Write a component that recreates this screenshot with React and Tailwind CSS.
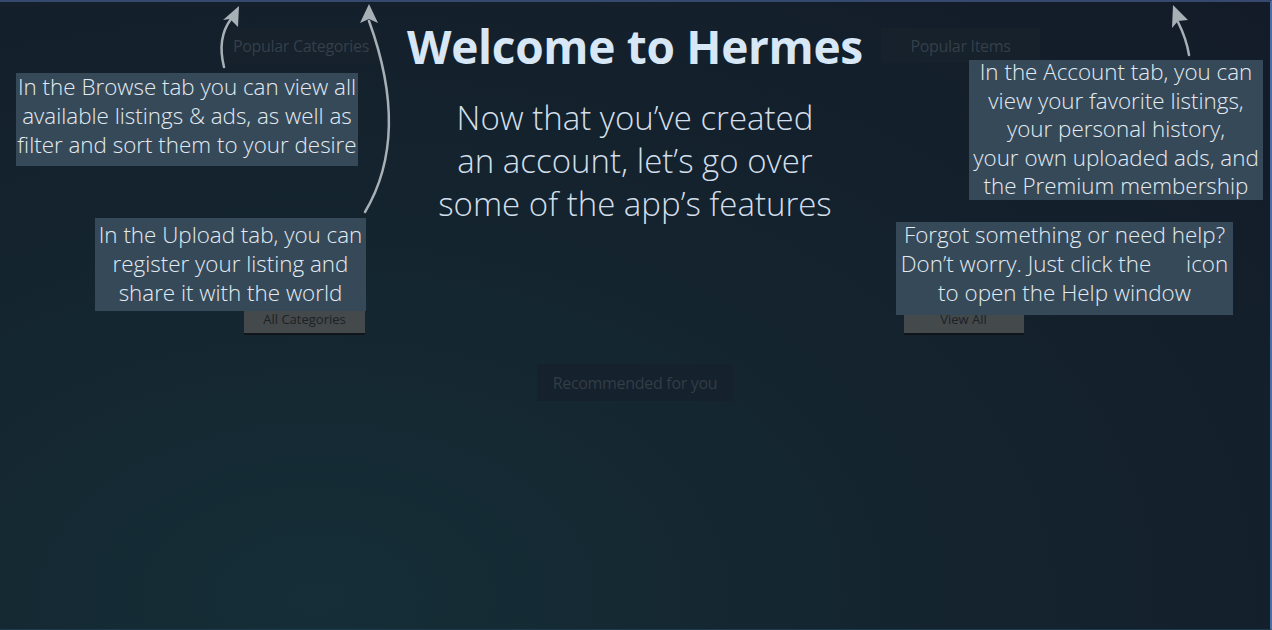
import React from "react";

const callFont = { fontFamily: '"Open Sans", "Noto Sans", sans-serif' };

function Callout({ className, innerClass, lines }) {
  return (
    <div
      className={`absolute bg-[#364959] text-[#e3ebf2] text-[22.4px] font-light text-center ${className}`}
      style={callFont}
    >
      <div className={innerClass}>
        {lines.map((l, i) => (
          <div key={i} className="whitespace-pre">{l}</div>
        ))}
      </div>
    </div>
  );
}

export default function App() {
  return (
    <div
      className="relative w-[1272px] h-[630px] overflow-hidden bg-[radial-gradient(ellipse_at_25%_95%,#152e37_0%,#14242f_45%,#131b28_100%)] border-t-2 border-t-[#34496c] border-r-2 border-r-[#4a6ea8] border-b border-b-[#1e3b4e]"
      style={{ fontFamily: '"Open Sans", "Noto Sans", sans-serif' }}
    >
      {/* top tab indicator */}
      <div className="absolute left-[622px] top-[-2px] w-[24px] h-[2px] bg-[#8196b6]" />

      {/* underlying dimmed app content */}
      <div className="flex justify-between pl-[222px] pr-[230px] pt-[26px]">
        <div className="flex flex-col items-center w-[158px]">
          <div className="h-[35px] w-[158px] bg-[#16212c] text-[#343f49] text-[16px] flex items-center justify-center tracking-[-0.3px]">
            Popular Categories
          </div>
          <div className="mt-[244px] ml-[7px] h-[28px] w-[121px] bg-[#44494c] border-b-2 border-b-[#0f1519] text-[#1c2226] text-[13px] flex items-center justify-center">
            All Categories
          </div>
        </div>
        <div className="flex flex-col items-center w-[159px]">
          <div className="h-[35px] w-[159px] bg-[#16212c] text-[#343f49] text-[16px] flex items-center justify-center tracking-[-0.3px]">
            Popular Items
          </div>
          <div className="mt-[244px] ml-[6px] h-[28px] w-[120px] bg-[#44494c] border-b-2 border-b-[#0f1519] text-[#1c2226] text-[13px] flex items-center justify-center">
            View All
          </div>
        </div>
      </div>
      <div className="flex justify-center mt-[29px]">
        <div className="h-[37px] w-[196px] bg-[#15212c] text-[#323d47] text-[16px] flex items-center justify-center tracking-[-0.3px]">
          Recommended for you
        </div>
      </div>

      {/* overlay: title and intro */}
      <div className="absolute left-0 right-0 top-[15px] flex flex-col items-center">
        <h1 className="text-[46px] font-bold leading-[58px] text-[#d8e7f6] tracking-[-0.3px]">
          Welcome to Hermes
        </h1>
        <p className="mt-[21px] text-[33px] font-light leading-[43px] text-[#d2dee9] text-center">
          Now that you’ve created
          <br />
          an account, let’s go over
          <br />
          some of the app’s features
        </p>
      </div>

      <Callout
        className="left-[16px] top-[71px] w-[342px] h-[93px]"
        innerClass="leading-[29px] -mt-[1px]"
        lines={["In the Browse tab you can view all", "available listings & ads, as well as", "filter and sort them to your desire"]}
      />
      <Callout
        className="left-[95px] top-[216px] w-[271px] h-[93px]"
        innerClass="leading-[29px] pt-[2px]"
        lines={["In the Upload tab, you can", "register your listing and", "share it with the world"]}
      />
      <Callout
        className="left-[969px] top-[58px] w-[294px] h-[140px]"
        innerClass="leading-[28.5px] -mt-[2px]"
        lines={["In the Account tab, you can", "view your favorite listings,", "your personal history,", "your own uploaded ads, and", "the Premium membership"]}
      />
      <Callout
        className="left-[896px] top-[220px] w-[337px] h-[93px]"
        innerClass="leading-[29px] -mt-[2px]"
        lines={["Forgot something or need help?", "Don’t worry. Just click the      icon", "to open the Help window"]}
      />

      {/* arrows */}
      <svg className="absolute left-0 top-[-2px] pointer-events-none" width="1272" height="630" viewBox="0 0 1272 630">
        <g fill="none" stroke="#a8b0b7" strokeWidth="2.5" strokeLinecap="round">
          <path d="M224 67 C219 47 222 31 231 19" />
          <path d="M365 212 C396 160 396 95 369 21" />
          <path d="M1189 55 C1187 42 1183 32 1178 22" />
        </g>
        <g fill="#a8b0b7">
          <path d="M239 6 L223 20 L230 19 L238 27 Z" />
          <path d="M369 4 L360 23 L369 19 L378 23 Z" />
          <path d="M1173 5 L1172 28 L1178 21 L1188 20 Z" />
        </g>
      </svg>
    </div>
  );
}
